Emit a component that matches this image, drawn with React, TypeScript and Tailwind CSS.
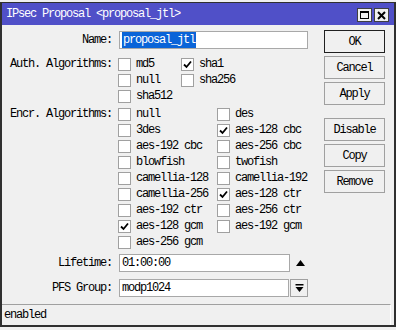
import React from "react";

const font = { fontFamily: '"Liberation Mono", "DejaVu Sans Mono", monospace' };

function Box({ checked }: { checked?: boolean }) {
  return (
    <div className="w-[13px] h-[13px] border border-[#a0a0a0] bg-white flex items-center justify-center shrink-0">
      {checked && (
        <svg width="9" height="9" viewBox="0 0 9 9">
          <path d="M1 4.5 L3.5 7 L8 1.5" stroke="#000" strokeWidth="1.8" fill="none" />
        </svg>
      )}
    </div>
  );
}

function Check({ label, checked }: { label: string; checked?: boolean }) {
  return (
    <div className="h-[16px] flex items-center gap-[5px] whitespace-pre">
      <Box checked={checked} />
      <span>{label}</span>
    </div>
  );
}

function Btn({ label, def }: { label: string; def?: boolean }) {
  return (
    <div
      className={`w-[61px] h-[23px] flex items-center justify-center bg-[#f0f0f0] border ${
        def ? "border-[#202020]" : "border-[#a0a0a0]"
      }`}
    >
      {label}
    </div>
  );
}

export default function App() {
  const encr: [string, boolean][] = [
    ["null", false],
    ["des", false],
    ["3des", false],
    ["aes-128 cbc", true],
    ["aes-192 cbc", false],
    ["aes-256 cbc", false],
    ["blowfish", false],
    ["twofish", false],
    ["camellia-128", false],
    ["camellia-192", false],
    ["camellia-256", false],
    ["aes-128 ctr", true],
    ["aes-192 ctr", false],
    ["aes-256 ctr", false],
    ["aes-128 gcm", true],
    ["aes-192 gcm", false],
    ["aes-256 gcm", false],
  ];
  return (
    <div
      className="w-[396px] h-[330px] bg-[#f0f0f0] pt-[2px] text-[12px] tracking-[-1.2px] text-black leading-none"
      style={font}
    >
      <div className="h-[325px] border-l-2 border-r-2 border-t border-b-2 border-[#303030] bg-[#f0f0f0] flex flex-col">
        {/* title bar */}
        <div className="h-[22px] bg-[#5050c8] flex items-center pl-[4px] pr-[5px] text-white">
          <span className="flex-1">IPsec Proposal &lt;proposal_jtl&gt;</span>
          <div className="flex gap-[2px] mt-[2px]">
            <div className="w-[15px] h-[14px] bg-[#f0f0f0] border border-[#404040] flex items-center justify-center">
              <div className="w-[9px] h-[8px] border border-black border-t-2" />
            </div>
            <div className="w-[15px] h-[14px] bg-[#f0f0f0] border border-[#404040] flex items-center justify-center">
              <svg width="9" height="9" viewBox="0 0 9 9">
                <path d="M1 1 L8 8 M8 1 L1 8" stroke="#000" strokeWidth="2" />
              </svg>
            </div>
          </div>
        </div>
        {/* body */}
        <div className="flex-1 flex">
          <div className="w-[320px] flex flex-col pt-[6px]">
            {/* Name */}
            <div className="flex items-center h-[18px]">
              <div className="w-[110px] text-right">Name:</div>
              <div className="ml-[7px] w-[189px] h-[18px] bg-white border border-[#a8a8a8] flex items-center pl-[2px]">
                <span className="bg-[#0a64d8] text-white px-[1px] py-[2px]">proposal_jtl</span>
              </div>
            </div>
            {/* Auth */}
            <div className="flex mt-[7px]">
              <div className="w-[110px] text-right h-[16px] flex items-center justify-end">Auth. Algorithms:</div>
              <div className="ml-[6px] grid grid-cols-[63px_80px]">
                <Check label="md5" />
                <Check label="sha1" checked />
                <Check label="null" />
                <Check label="sha256" />
                <Check label="sha512" />
              </div>
            </div>
            {/* Encr */}
            <div className="flex mt-[2px]">
              <div className="w-[110px] text-right h-[16px] flex items-center justify-end">Encr. Algorithms:</div>
              <div className="ml-[6px] grid grid-cols-[99px_100px]">
                {encr.map(([l, c]) => (
                  <Check key={l} label={l} checked={c} />
                ))}
              </div>
            </div>
            {/* Lifetime */}
            <div className="flex items-center h-[18px] mt-[4px]">
              <div className="w-[110px] text-right">Lifetime:</div>
              <div className="ml-[7px] w-[171px] h-[18px] bg-white border border-[#a8a8a8] flex items-center pl-[2px]">
                01:00:00
              </div>
              <svg className="ml-[6px]" width="9" height="6" viewBox="0 0 9 6">
                <path d="M0 6 L4.5 0 L9 6 Z" fill="#000" />
              </svg>
            </div>
            {/* PFS */}
            <div className="flex items-center h-[18px] mt-[7px]">
              <div className="w-[110px] text-right">PFS Group:</div>
              <div className="ml-[7px] w-[170px] h-[18px] bg-white border border-[#a8a8a8] flex items-center pl-[2px]">
                modp1024
              </div>
              <div className="ml-[1px] w-[18px] h-[18px] border border-[#a0a0a0] bg-[#f0f0f0] flex items-center justify-center">
                <svg width="9" height="9" viewBox="0 0 9 9">
                  <rect x="0.5" y="0" width="8" height="1.5" fill="#000" />
                  <path d="M0.5 3 L8.5 3 L4.5 8 Z" fill="#000" />
                </svg>
              </div>
            </div>
          </div>
          {/* buttons */}
          <div className="flex flex-col pt-[5px] ml-[2px] gap-[3px]">
            <Btn label="OK" def />
            <Btn label="Cancel" />
            <Btn label="Apply" />
            <div className="h-[7px]" />
            <Btn label="Disable" />
            <Btn label="Copy" />
            <Btn label="Remove" />
          </div>
        </div>
        {/* status */}
        <div className="h-[21px] mr-[3px] border-t border-[#a0a0a0] border-r border-r-[#ffffff] flex items-center pl-[2px]">
          enabled
        </div>
      </div>
    </div>
  );
}
